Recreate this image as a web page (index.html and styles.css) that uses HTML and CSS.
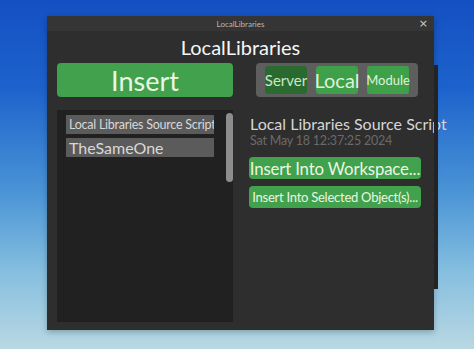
FILE: index.html
```html
<!DOCTYPE html>
<html>
<head>
<meta charset="utf-8">
<link rel="stylesheet" href="styles.css">
</head>
<body>
<div class="window">
  <div class="titlebar"><span class="tb-title">LocalLibraries</span><span class="tb-close">×</span></div>
  <div class="main">
    <div class="heading">LocalLibraries</div>
    <div class="toprow">
      <div class="insert">Insert</div>
      <div class="seg">
        <div class="segbtn dark s-server">Server</div>
        <div class="segbtn s-local">Local</div>
        <div class="segbtn s-module">Module</div>
      </div>
    </div>
    <div class="bottomrow">
      <div class="list">
        <div class="items">
          <div class="item small">Local Libraries Source Script</div>
          <div class="item big">TheSameOne</div>
        </div>
        <div class="scrollbar"></div>
      </div>
      <div class="detail">
        <div class="d-name">Local Libraries Source Script</div>
        <div class="d-date">Sat May 18 12:37:25 2024</div>
        <div class="act act1">Insert Into Workspace...</div>
        <div class="act act2">Insert Into Selected Object(s)...</div>
      </div>
    </div>
  </div>
  <div class="strip"></div>
</div>
</body>
</html>
```

FILE: styles.css
```css
html, body { margin: 0; padding: 0; }
body {
  width: 474px;
  height: 349px;
  overflow: hidden;
  background: linear-gradient(to bottom, #1450c2 0%, #1d62cc 25%, #4a94d6 55%, #86bfdf 78%, #b9d8e3 100%);
  font-family: Lato, "Noto Sans", sans-serif;
  padding: 16px 0 0 47px;
  box-sizing: border-box;
}
.window {
  position: relative;
  width: 387px;
  height: 314px;
  background: #2e2e2e;
  box-shadow: 0 2px 6px rgba(0,0,0,0.25);
}
.titlebar {
  height: 15px;
  background: #353535;
  position: relative;
  display: flex;
  align-items: center;
  justify-content: center;
}
.tb-title { font-size: 8px; color: #b8b8b8; }
.tb-close {
  position: absolute;
  right: 6px;
  top: 1px;
  font-size: 11px;
  color: #cfcfcf;
  font-family: "DejaVu Sans", sans-serif;
}
.main { padding: 0 13px 0 10px; }
.heading {
  height: 32px;
  display: flex;
  align-items: center;
  justify-content: center;
  color: #f6f6f6;
  font-size: 20px;
  padding-left: 3px;
}
.toprow { display: flex; height: 34px; }
.insert {
  width: 176px;
  height: 34px;
  background: #41a14c;
  border-radius: 4px;
  color: #eaf7e2;
  font-size: 27px;
  display: flex;
  align-items: center;
  justify-content: center;
  line-height: 1;
}
.seg {
  margin-left: 23px;
  width: 162px;
  height: 34px;
  background: #5e5e5e;
  border-radius: 4px;
  display: flex;
  align-items: center;
  padding: 0 9px;
  box-sizing: border-box;
  gap: 9px;
}
.segbtn {
  width: 42px;
  height: 28px;
  background: #3fa04a;
  border-radius: 3px;
  color: #dff2d8;
  display: flex;
  align-items: center;
  justify-content: center;
  white-space: nowrap;
  line-height: 1;
}
.segbtn.dark { background: #2a6a2f; color: #c9e6c4; }
.s-server { font-size: 15px; }
.s-local { font-size: 20px; }
.s-module { font-size: 13px; }
.bottomrow { display: flex; margin-top: 13px; }
.list {
  width: 176px;
  height: 212px;
  background: #212121;
  position: relative;
  box-sizing: border-box;
  padding: 5px 0 0 9px;
}
.items { display: flex; flex-direction: column; gap: 4px; width: 148px; }
.item {
  background: #5b5b5b;
  color: #d8d8d8;
  white-space: nowrap;
  overflow: hidden;
  padding-left: 3px;
  display: flex;
  align-items: center;
}
.item.small { height: 19px; font-size: 12.5px; letter-spacing: -0.25px; }
.item.big { height: 19px; font-size: 16px; }
.scrollbar {
  position: absolute;
  right: 0;
  top: 3px;
  width: 7px;
  height: 69px;
  background: #8d8d8d;
  border-radius: 4px;
}
.detail {
  margin-left: 16px;
  width: 172px;
  padding-top: 5px;
}
.d-name { color: #d6d6d6; font-size: 16px; line-height: 18px; white-space: nowrap; padding-left: 1px; }
.d-date { color: #6a6a6a; font-size: 12.5px; line-height: 16px; letter-spacing: -0.2px; white-space: nowrap; padding-left: 1px; }
.act {
  background: #41a14c;
  color: #eaf7e2;
  border-radius: 4px;
  display: flex;
  align-items: center;
  justify-content: center;
  white-space: nowrap;
}
.act1 { margin-top: 8px; height: 22px; font-size: 16.8px; letter-spacing: -0.15px; }
.act2 { margin-top: 7px; height: 22px; font-size: 13px; letter-spacing: -0.25px; }
.strip {
  position: absolute;
  left: 387px;
  top: 49px;
  width: 4px;
  height: 224px;
  background: #232323;
}
```
